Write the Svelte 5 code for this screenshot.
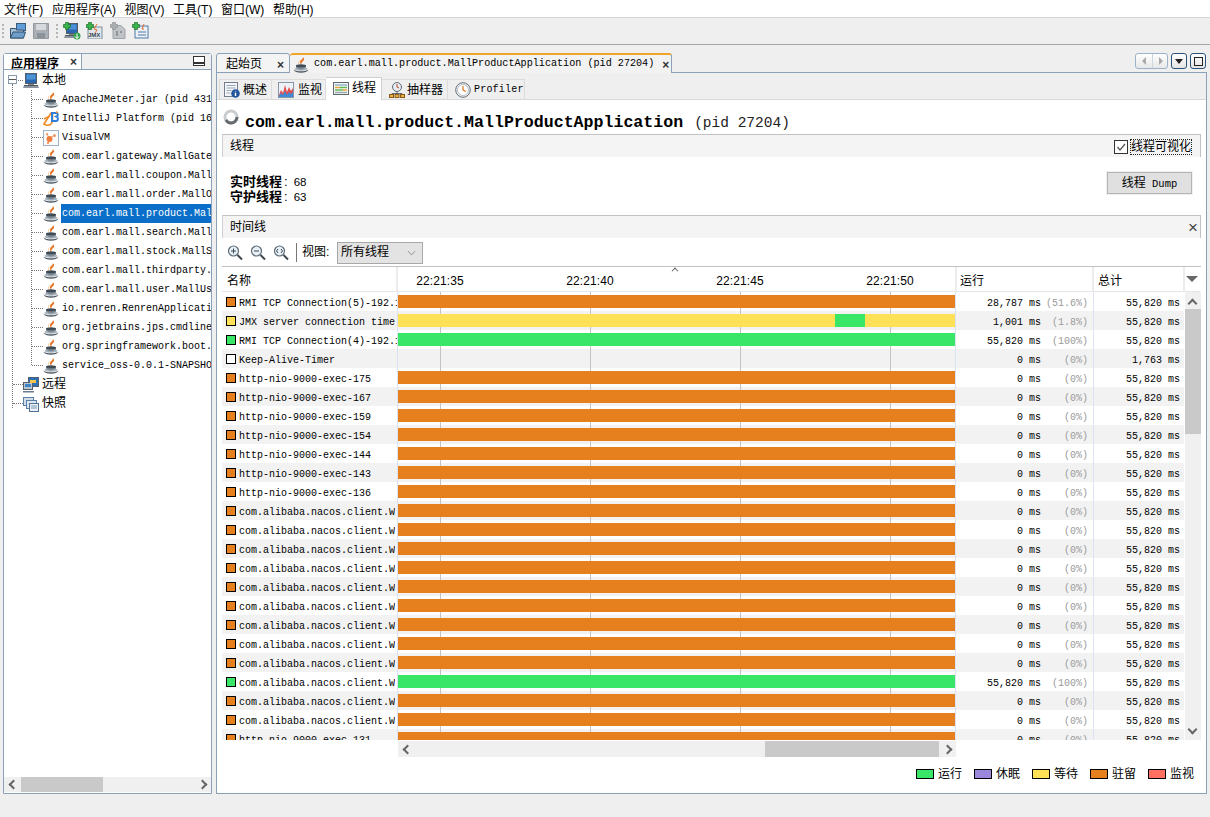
<script>
  const menus = ['文件(F)', '应用程序(A)', '视图(V)', '工具(T)', '窗口(W)', '帮助(H)'];
  const apps = [
    ['java', 'ApacheJMeter.jar (pid 431'],
    ['idea', 'IntelliJ Platform (pid 16'],
    ['vvm', 'VisualVM'],
    ['java', 'com.earl.gateway.MallGate'],
    ['java', 'com.earl.mall.coupon.Mall'],
    ['java', 'com.earl.mall.order.MallO'],
    ['java', 'com.earl.mall.product.Mal'],
    ['java', 'com.earl.mall.search.Mall'],
    ['java', 'com.earl.mall.stock.MallS'],
    ['java', 'com.earl.mall.thirdparty.'],
    ['java', 'com.earl.mall.user.MallUs'],
    ['java', 'io.renren.RenrenApplicati'],
    ['java', 'org.jetbrains.jps.cmdline'],
    ['java', 'org.springframework.boot.'],
    ['java', 'service_oss-0.0.1-SNAPSHO']
  ];
  const worker = 'com.alibaba.nacos.client.W';
  const park = (name) => ({ name, kind: 'park', run: '0 ms', pct: '(0%)', total: '55,820 ms' });
  const rows = [
    { name: 'RMI TCP Connection(5)-192.1', kind: 'park', run: '28,787 ms', pct: '(51.6%)', total: '55,820 ms' },
    { name: 'JMX server connection time', kind: 'wait', run: '1,001 ms', pct: '(1.8%)', total: '55,820 ms' },
    { name: 'RMI TCP Connection(4)-192.1', kind: 'run', run: '55,820 ms', pct: '(100%)', total: '55,820 ms' },
    { name: 'Keep-Alive-Timer', kind: 'none', run: '0 ms', pct: '(0%)', total: '1,763 ms' },
    ...[175, 167, 159, 154, 144, 143, 136].map((n) => park('http-nio-9000-exec-' + n)),
    ...Array.from({ length: 9 }, () => park(worker)),
    { name: worker, kind: 'run', run: '55,820 ms', pct: '(100%)', total: '55,820 ms' },
    park(worker),
    park(worker),
    park('http-nio-9000-exec-131')
  ];
  const times = ['22:21:35', '22:21:40', '22:21:45', '22:21:50'];
  const legend = [['run', '运行'], ['sleep', '休眠'], ['wait', '等待'], ['park', '驻留'], ['mon', '监视']];
  const subtabs = [
    ['i-info', '概述', false, false],
    ['i-chart', '监视', false, false],
    ['i-threads', '线程', true, false],
    ['i-sampler', '抽样器', false, false],
    ['i-clock', 'Profiler', false, true]
  ];
</script>

<svg class="defs" width="0" height="0" aria-hidden="true">
  <defs>
    <symbol id="java" viewBox="0 0 16 16">
      <path d="M9.800 0c.9 2-3.200 3.200-2.800 5.800.2 1 .9 1.800 1.200 2.400 0-1.200-.1-2 .8-3 1-1.100 2.500-2 2-3.600C10.700 1 10.300.4 9.800 0z" fill="#e8701e"/>
      <path d="M7.500 3C5.300 4.500 4.800 6.200 6.400 8.200 5 7.500 3.800 4.800 7.500 3z" fill="#f2a33c"/>
      <path d="M3 8.500h10v2.500c0 1.500-2.200 2.300-5 2.300S3 12.500 3 11z" fill="#7c8a96"/>
      <ellipse cx="8" cy="8.700" rx="5" ry="1.500" fill="#3f4a54"/>
      <path d="M.4 12.400c.8 2.200 3.900 3.300 7.600 3.300s6.800-1.100 7.600-3.300c-1 1.100-4 1.800-7.600 1.800S1.400 13.500.4 12.400z" fill="#4e5a65"/>
      <path d="M1.200 12c1.500 1.100 4 1.600 6.800 1.600s5.300-.5 6.800-1.600c-1-.9-2-1.200-2.800-1.300-.7 1.300-2.200 1.700-4 1.700s-3.300-.4-4-1.700c-.8.100-1.800.4-2.800 1.300z" fill="#a7b2bb"/>
    </symbol>
    <symbol id="idea" viewBox="0 0 16 16">
      <path d="M1 13 8 2 9.500 2 9.500 9C9.500 13 6.500 15 3 14z" fill="none" stroke="#f08a24" stroke-width="1.600"/>
      <path d="M9 2h4.500c1.500 0 2 2.800 0 3.500 2 .7 2 4.500-.5 4.500H9z" fill="none" stroke="#2f7fd8" stroke-width="2"/>
      <path d="M1 8 7 5M13 1l2 .5" stroke="#f08a24" stroke-width="1.400"/>
    </symbol>
    <symbol id="vvm" viewBox="0 0 16 16">
      <rect x=".5" y=".5" width="15" height="15" fill="#fbfbfb" stroke="#9fb2c6"/>
      <circle cx="6.500" cy="9" r="3" fill="#ee7c3c"/>
      <circle cx="11.500" cy="5.500" r="1.500" fill="#f19a6a"/>
      <circle cx="4" cy="4" r="1.100" fill="#f19a6a"/>
      <circle cx="5" cy="13" r="1" fill="#ee7c3c"/>
      <path d="M7 8 11 5.500M4 4l2 4M6 9 5 13" stroke="#ee7c3c" stroke-width=".7"/>
    </symbol>
    <symbol id="monitor" viewBox="0 0 16 16">
      <rect x="2.500" y=".5" width="11" height="10" fill="#2968b0" stroke="#555d64"/>
      <rect x="3.500" y="1.500" width="9" height="5" fill="#4b93d6"/>
      <path d="M5 11h6v1.500H5z" fill="#7b848c"/>
      <path d="M1 12.500h14l1 2.500H0z" fill="#8b949c"/>
      <path d="M1 12.500h14" stroke="#50585f"/>
    </symbol>
    <symbol id="remote" viewBox="0 0 16 16">
      <rect x="5.500" y=".5" width="10" height="9" fill="#2e70b8" stroke="#50606f"/>
      <rect x=".5" y="5.500" width="9" height="7" fill="#b9c6d1" stroke="#50606f"/>
      <rect x="2" y="7" width="6" height="3" fill="#3d84c9"/>
      <path d="M0 14h11v1.500H0z" fill="#6e7a85"/>
      <path d="M7 3h6v3H7z" fill="#f6c54a"/>
    </symbol>
    <symbol id="snapshot" viewBox="0 0 16 16">
      <rect x=".5" y="1.500" width="10" height="8" fill="#d4dee8" stroke="#5880a8"/>
      <rect x="3.500" y="4.500" width="10" height="8" fill="#dfe7ee" stroke="#5880a8"/>
      <rect x="6.500" y="7.500" width="9" height="8" fill="#edf1f5" stroke="#4d7299"/>
      <path d="M8 10h6M8 12h6" stroke="#7d9ab6"/>
    </symbol>
    <symbol id="plus" viewBox="0 0 8 8">
      <path d="M2.500.5h3v2h2v3h-2v2h-3v-2h-2v-3h2z" fill="#38b54a" stroke="#1f6b2a" stroke-width=".7"/>
    </symbol>
    <symbol id="i-info" viewBox="0 0 16 16">
      <rect x=".5" y=".5" width="13" height="14" fill="#f3f5f8" stroke="#73818e"/>
      <path d="M2.500 3.500h9M2.500 6h9M2.500 8.500h5M2.500 11h4" stroke="#9aa8b5"/>
      <circle cx="11.500" cy="11.500" r="4.300" fill="#23559d"/>
      <path d="M11.500 9.500v.8M11.500 11v3" stroke="#fff" stroke-width="1.400"/>
    </symbol>
    <symbol id="i-chart" viewBox="0 0 16 16">
      <rect x=".5" y=".5" width="15" height="15" fill="#eef2f7" stroke="#8696a6"/>
      <path d="M1 13 3 8 5 11 7 3 9 10 11 5 13 9 15 6V15H1z" fill="#e04e52"/>
      <path d="M1 14 3 11 5 13 7 9 9 13 11 10 13 12 15 10V15H1z" fill="#3d8ad8"/>
    </symbol>
    <symbol id="i-threads" viewBox="0 0 16 16">
      <rect x=".5" y="1.500" width="15" height="12" fill="#f5f5ef" stroke="#5c6973"/>
      <path d="M2 4h12" stroke="#8eb0d0" stroke-width="1.400"/>
      <path d="M2 6.500h5" stroke="#e9a33a" stroke-width="1.400"/>
      <path d="M7 6.500h7" stroke="#59b856" stroke-width="1.400"/>
      <path d="M2 9h8" stroke="#59b856" stroke-width="1.400"/>
      <path d="M10 9h4" stroke="#e9a33a" stroke-width="1.400"/>
      <path d="M2 11.500h12" stroke="#9aa6b0" stroke-width="1.400"/>
    </symbol>
    <symbol id="i-sampler" viewBox="0 0 16 16">
      <circle cx="8" cy="5" r="4.500" fill="#e6ebf0" stroke="#5e6b76"/>
      <path d="M8 2v3l2 1" stroke="#c04b2f" fill="none"/>
      <path d="M8 9.500v2M3 11.500h10M3 11.500v1M13 11.500v1" stroke="#5e6b76"/>
      <rect x=".5" y="12.500" width="4" height="3" fill="#e9b04a" stroke="#8a5a16"/>
      <rect x="6" y="12.500" width="4" height="3" fill="#e9b04a" stroke="#8a5a16"/>
      <rect x="11.500" y="12.500" width="4" height="3" fill="#e9b04a" stroke="#8a5a16"/>
    </symbol>
    <symbol id="i-clock" viewBox="0 0 16 16">
      <circle cx="8" cy="8" r="7.300" fill="#eef0f2" stroke="#66727c"/>
      <circle cx="8" cy="8" r="5.500" fill="#fff" stroke="#b6bec5"/>
      <path d="M8 4v4l3 1.500" fill="none" stroke="#d9822b" stroke-width="1.300"/>
    </symbol>
    <symbol id="z-in" viewBox="0 0 16 16">
      <circle cx="6.500" cy="6" r="5" fill="#e8f1f8" stroke="#5f6b75" stroke-width="1.200"/>
      <path d="M4 6h5M6.500 3.500v5" stroke="#3d464d"/>
      <path d="m10.500 10 4.500 4.500" stroke="#3d464d" stroke-width="2"/>
    </symbol>
    <symbol id="z-out" viewBox="0 0 16 16">
      <circle cx="6.500" cy="6" r="5" fill="#e8f1f8" stroke="#5f6b75" stroke-width="1.200"/>
      <path d="M4 6h5" stroke="#3d464d"/>
      <path d="m10.500 10 4.500 4.500" stroke="#3d464d" stroke-width="2"/>
    </symbol>
    <symbol id="z-fit" viewBox="0 0 16 16">
      <circle cx="6.500" cy="6" r="5" fill="#e8f1f8" stroke="#5f6b75" stroke-width="1.200"/>
      <path d="M5 4 3.500 6 5 8M8 4l1.500 2L8 8" fill="none" stroke="#3d464d"/>
      <path d="m10.500 10 4.500 4.500" stroke="#3d464d" stroke-width="2"/>
    </symbol>
  </defs>
</svg>

<div class="app">
  <nav class="menubar">
    {#each menus as m}<span class="menu">{m}</span>{/each}
  </nav>

  <div class="toolbar">
    <span class="grip"></span>
    <svg class="tool" viewBox="0 0 16 16">
      <rect x="6.500" y=".5" width="9" height="7" fill="#5f9ed8" stroke="#3d5c7c"/>
      <path d="M.5 5.500h5l1 1.500h7v8H.5z" fill="#a8c2da" stroke="#34536f"/>
      <path d="M.5 15 3 9h12.500l-2 6z" fill="#6d9dc8" stroke="#34536f"/>
    </svg>
    <svg class="tool" viewBox="0 0 16 16">
      <path d="M.5.5h15v15H.5z" fill="#a9afb4" stroke="#949a9f"/>
      <path d="M3 1h10v6H3z" fill="#d6dadd"/>
      <path d="M4 10h8v5H4z" fill="#8c9398"/>
    </svg>
    <span class="grip g2"></span>
    <span class="tool stack t3">
      <svg viewBox="0 0 16 16"><use href="#monitor"/></svg>
      <svg class="plus" viewBox="0 0 8 8"><use href="#plus"/></svg>
      <svg class="plusr" viewBox="0 0 8 8"><circle cx="4" cy="4" r="3.500" fill="#2ea14a"/><path d="M4 1.500v5M2 4.500l2 2 2-2" stroke="#fff" fill="none"/></svg>
    </span>
    <span class="tool stack t4">
      <svg viewBox="0 0 16 16"><rect x="1" y="4" width="14" height="12" fill="#dfe6ec" stroke="#7f8d9a"/><path d="M10 1 7 6l3 1-2 3" stroke="#e06a2e" fill="none"/></svg>
      <span class="jmx">JMX</span>
      <svg class="plus" viewBox="0 0 8 8"><use href="#plus"/></svg>
    </span>
    <span class="tool stack t5">
      <svg viewBox="0 0 16 16"><path d="M2 2.500h8l4 4v9H2z" fill="#c0c4c7" stroke="#9ea3a7"/><path d="M5 8h2v5H5zM9 8h2v2H9z" fill="#8f9599"/></svg>
      <svg class="plus dim" viewBox="0 0 8 8"><path d="M2.500.5h3v2h2v3h-2v2h-3v-2h-2v-3h2z" fill="#a8aeb2" stroke="#8f9599" stroke-width=".7"/></svg>
    </span>
    <span class="tool stack t6">
      <svg viewBox="0 0 16 16"><rect x="2" y="3" width="13" height="12" fill="#eaf0f5" stroke="#4f7ba5"/><path d="M5 9h8M5 12h8" stroke="#4f7ba5"/><path d="M11 1 9 6h2" stroke="#e06a2e" fill="none"/></svg>
      <svg class="plus" viewBox="0 0 8 8"><use href="#plus"/></svg>
    </span>
  </div>

  <main class="main">
    <aside class="left">
      <div class="lhead">
        <div class="ltab"><b>应用程序</b><span class="x">×</span></div>
        <span class="minbtn"></span>
      </div>
      <div class="tree">
        <div class="tnode root">
          <span class="expander"></span>
          <svg class="ico"><use href="#monitor"/></svg>
          <span class="cjk">本地</span>
        </div>
        {#each apps as [icon, label], i}
          <div class="tnode child" class:last={i === apps.length - 1}>
            <svg class="ico"><use href={'#' + icon}/></svg>
            <span class="mono" class:sel={i === 6}>{label}</span>
          </div>
        {/each}
        <div class="tnode root leaf">
          <svg class="ico"><use href="#remote"/></svg>
          <span class="cjk">远程</span>
        </div>
        <div class="tnode root leaf end">
          <svg class="ico"><use href="#snapshot"/></svg>
          <span class="cjk">快照</span>
        </div>
      </div>
      <div class="hbar lhbar">
        <span class="arr lft"></span>
        <span class="thumb lthumb"></span>
        <span class="arr rgt"></span>
      </div>
    </aside>

    <section class="right">
      <div class="rtabs">
        <div class="rtab first"><span>起始页</span><span class="x">×</span></div>
        <div class="rtab active">
          <svg class="ico"><use href="#java"/></svg>
          <span class="mono tabtitle">com.earl.mall.product.MallProductApplication (pid 27204)</span>
          <span class="x">×</span>
        </div>
        <div class="tabctl">
          <span class="navpair"><span class="tri l"></span><span class="tri r"></span></span>
          <span class="winbtn"><span class="tri d"></span></span>
          <span class="winbtn"><span class="sq"></span></span>
        </div>
      </div>

      <div class="rbody">
        <div class="subtabs">
          {#each subtabs as [icon, label, on, mono]}
            <div class="stab" class:on>
              <svg class="ico"><use href={'#' + icon}/></svg>
              <span class:mono>{label}</span>
            </div>
          {/each}
        </div>

        <h1 class="title">
          <svg class="spin" viewBox="0 0 16 16">
            <circle cx="8" cy="8" r="6" fill="none" stroke="#c9ccce" stroke-width="3"/>
            <path d="M14 8a6 6 0 0 1-6 6 6 6 0 0 1-5-3" fill="none" stroke="#666b70" stroke-width="3"/>
          </svg>
          <span class="tmain">com.earl.mall.product.MallProductApplication</span>
          <span class="tpid">(pid 27204)</span>
        </h1>

        <div class="sechead">
          <span class="shlabel">线程</span>
          <label class="check">
            <span class="box"><svg viewBox="0 0 12 12"><path d="M2.500 6 5 9l5-6" fill="none" stroke="#555" stroke-width="1.300"/></svg></span>
            <span class="focus">线程可视化</span>
          </label>
        </div>

        <div class="stats">
          <div class="statlines">
            <div><b>实时线程</b><i>:</i><span>68</span></div>
            <div><b>守护线程</b><i>:</i><span>63</span></div>
          </div>
          <button class="dump">线程 <span class="mono">Dump</span></button>
        </div>

        <div class="sechead tl">
          <span class="shlabel">时间线</span>
          <span class="x big">×</span>
        </div>

        <div class="tltools">
          <svg class="zoomi"><use href="#z-in"/></svg>
          <svg class="zoomi"><use href="#z-out"/></svg>
          <svg class="zoomi"><use href="#z-fit"/></svg>
          <span class="vsep"></span>
          <span class="viewlbl">视图:</span>
          <span class="combo">所有线程<svg viewBox="0 0 10 6"><path d="M1 1l4 4 4-4" fill="none" stroke="#a8a8a8" stroke-width="1.200"/></svg></span>
        </div>

        <div class="table">
          <div class="thead">
            <div class="hname"><span>名称</span></div>
            <div class="htime">
              <span class="caret"></span>
              <div class="times">{#each times as t}<span>{t}</span>{/each}</div>
            </div>
            <div class="hrun"><span>运行</span></div>
            <div class="htotal"><span>总计</span></div>
            <div class="hcorner"><span class="tri d gray"></span></div>
          </div>
          <div class="tbody">
            <div class="rows">
              {#each rows as r, i}
                <div class="row" class:alt={i % 2 === 1}>
                  <div class="cname">
                    <span class="swatch {r.kind}"></span>
                    <span class="mono nm">{r.name}</span>
                  </div>
                  <div class="ctime">
                    {#if r.kind !== 'none'}
                      <div class="bar {r.kind}">
                        {#if i === 1}<span class="seg"></span>{/if}
                      </div>
                    {/if}
                  </div>
                  <div class="crun mono"><span class="ms">{r.run}</span><span class="pct">{r.pct}</span></div>
                  <div class="ctotal mono">{r.total}</div>
                </div>
              {/each}
            </div>
            <div class="vbar">
              <span class="chev up"></span>
              <span class="vthumb"></span>
              <span class="chev down"></span>
            </div>
          </div>
          <div class="hfoot">
            <div class="hbar thbar">
              <span class="arr lft"></span>
              <span class="thumb tthumb"></span>
              <span class="arr rgt"></span>
            </div>
          </div>
        </div>

        <div class="legend">
          {#each legend as [k, label]}
            <span class="lg"><span class="lsw {k}"></span>{label}</span>
          {/each}
        </div>
      </div>
    </section>
  </main>
</div>

<style>
  :global(body) { margin: 0; background: #efefef; }
  .defs { position: absolute; }
  .app {
    width: 1210px; height: 817px; overflow: hidden; display: flex; flex-direction: column;
    background: #efefef; color: #000;
    font: 12px/1.2 "Liberation Sans", "Noto Sans CJK SC", sans-serif;
  }
  .mono { font-family: "Liberation Mono", "Noto Sans CJK SC", monospace; font-size: 10px; white-space: nowrap; }
  .cjk { font-size: 12px; }
  .x { font-size: 14px; font-weight: 700; color: #333; line-height: 1; }

  .menubar { height: 17px; box-sizing: border-box; padding: 3px 0 0 4px; background: #fff; display: flex; align-items: center; gap: 8.600px; }
  .menu { white-space: nowrap; }

  .toolbar {
    height: 26px; border-top: 1px solid #d6d6d6; border-bottom: 1px solid #a6a6a6;
    display: flex; align-items: center; padding-left: 2px; position: relative;
  }
  .grip { width: 2px; height: 14px; border-left: 2px dotted #b5b5b5; margin-right: 4px; }
  .g2 { margin: 0 4px 0 0; }
  .tool { width: 16px; height: 16px; margin-right: 7px; display: block; flex: none; }
  .stack { position: relative; }
  .stack > svg:first-child { width: 16px; height: 16px; display: block; }
  .t4 { margin-right: 8px; }
  .t5 { margin-right: 6px; }
  .plus { position: absolute; left: -1px; top: -1px; width: 8px; height: 8px; }
  .plusr { position: absolute; right: -1px; bottom: -1px; width: 8px; height: 8px; }
  .jmx { position: absolute; left: 1px; bottom: 1px; font: 700 6px/6px "Liberation Sans", sans-serif; color: #3a4650; }

  .main { flex: 1; display: flex; padding: 8px 3px 23px 3px; gap: 4px; min-height: 0; }

  .left { width: 209px; flex: none; display: flex; flex-direction: column; border: 1px solid #8aa1b9; border-radius: 3px 3px 0 0; background: #fff; box-sizing: border-box; }
  .lhead { height: 15px; display: flex; background: #efefef; border-bottom: 1px solid #8aa1b9; position: relative; flex: none; }
  .ltab { width: 78px; box-sizing: border-box; background: #fff; border-right: 1px solid #8aa1b9; display: flex; padding: 3px 0 0 7px; gap: 11px; overflow: hidden; }
  .ltab b { font-weight: 700; font-size: 12px; line-height: 14px; white-space: nowrap; }
  .ltab .x { font-size: 12px; margin-top: -1px; }
  .minbtn { position: absolute; right: 6px; top: 2px; width: 10px; height: 8px; border: 1px solid #333; background: linear-gradient(#fff 5px, #333 5px, #333 7px, #fff 7px); }

  .tree { flex: 1; padding-top: 1px; overflow: hidden; position: relative; }
  .tree::before { content: ""; position: absolute; left: 8px; top: 14px; height: 324px; border-left: 1px dotted #777; }
  .tree::after { content: ""; position: absolute; left: 27px; top: 20px; height: 275px; border-left: 1px dotted #777; }
  .tnode { height: 19px; display: flex; align-items: center; position: relative; white-space: nowrap; }
  .root { padding-left: 19px; gap: 3px; }
  .child { padding-left: 39px; gap: 2px; }
  .child::before { content: ""; position: absolute; left: 28px; top: 9px; width: 11px; border-top: 1px dotted #777; }
  .leaf::before { content: ""; position: absolute; left: 9px; top: 9px; width: 10px; border-top: 1px dotted #777; }
  .root:not(.leaf)::before { content: ""; position: absolute; left: 14px; top: 9px; width: 5px; border-top: 1px dotted #777; }
  .expander { position: absolute; left: 4px; top: 4px; width: 7px; height: 7px; border: 1px solid #8a9aaa; background: linear-gradient(#fff 3px, #555 3px, #555 4px, #fff 4px); z-index: 1; }
  .ico { width: 16px; height: 16px; flex: none; }
  .child .mono { display: inline-block; line-height: 19px; padding-left: 1px; height: 19px; flex: 1; overflow: hidden; }
  .sel { background: #0b6fc9; color: #fff; }

  .hbar { background: #f0f0f0; display: flex; align-items: center; position: relative; height: 15px; }
  .lhbar { margin-bottom: 1px; flex: none; }
  .arr { width: 16px; height: 100%; flex: none; display: flex; align-items: center; justify-content: center; }
  .arr::before { content: ""; width: 5px; height: 5px; border: solid #666; border-width: 2px 0 0 2px; }
  .lft::before { transform: translateX(1px) rotate(-45deg); }
  .rgt::before { transform: translateX(-1px) rotate(135deg); }
  .rgt { margin-left: auto; }
  .thumb { height: 100%; background: #c9c9c9; flex: none; }
  .lthumb { width: 82px; margin-left: 1px; }
  .tthumb { width: 174px; margin-left: 351px; }

  .right { flex: 1; min-width: 0; display: flex; flex-direction: column; }
  .rtabs { height: 20px; display: flex; flex: none; position: relative; z-index: 1; margin-bottom: -1px; }
  .rtab { display: flex; align-items: center; box-sizing: border-box; height: 20px; padding-top: 3px; }
  .rtab.first { width: 74px; padding-left: 9px; gap: 15px; background: #f4f4f4; border: 1px solid #8aa1b9; border-radius: 3px 3px 0 0; }
  .rtab.first .x { font-size: 12px; }
  .rtab.active { width: 382px; padding-left: 3px; gap: 4px; background: #f2f2f2; border-top: 2px solid #f0a428; border-right: 1px solid #8aa1b9; border-radius: 3px 3px 0 0; padding-top: 1px; }
  .tabtitle { font-size: 10.150px; margin-left: 1px; }
  .rtab.active .x { font-size: 12px; margin-left: 4px; }
  .tabctl { margin-left: auto; display: flex; gap: 3px; padding-right: 1px; height: 16px; align-items: flex-start; }
  .navpair { width: 31px; height: 14px; border: 1px solid #9db2c9; border-radius: 3px; background: linear-gradient(#fff, #e8e8e8); display: flex; position: relative; }
  .navpair::after { content: ""; position: absolute; left: 16px; top: 0; bottom: 0; border-left: 1px solid #cdd6df; }
  .winbtn { width: 14px; height: 14px; border: 1px solid #2b5378; border-radius: 3px; background: linear-gradient(#fff, #e4e4e4); display: flex; align-items: center; justify-content: center; }
  .tri { width: 0; height: 0; display: block; }
  .tri.l { border: 4px solid transparent; border-right: 4px solid #aaa; border-left: 0; margin: 3px 0 0 6px; }
  .tri.r { border: 4px solid transparent; border-left: 4px solid #aaa; border-right: 0; margin: 3px 0 0 13px; }
  .tri.d { border: 4px solid transparent; border-top: 5px solid #222; border-bottom: 0; }
  .tri.gray { border-width: 6px 6px 0; border-top-color: #666; }
  .sq { width: 7px; height: 7px; border: 1px solid #222; }

  .rbody { flex: 1; min-height: 0; box-sizing: border-box; border: 1px solid #8aa1b9; background: #fff; display: flex; flex-direction: column; }
  .subtabs { height: 27px; flex: none; box-sizing: border-box; background: #efefef; border-bottom: 1px solid #d8d8d8; display: flex; align-items: flex-end; padding-left: 2px; }
  .stab { height: 20px; box-sizing: border-box; display: flex; align-items: center; padding-top: 1px; border: 1px solid #dcdcdc; border-bottom: 0; border-left: 0; white-space: nowrap; flex: none; }
  .stab:nth-child(1) { width: 53px; padding-left: 4px; gap: 3px; border-left: 1px solid #dcdcdc; }
  .stab:nth-child(2) { width: 54px; padding-left: 6px; gap: 4px; }
  .stab.on { width: 56px; height: 23px; background: #fff; margin-bottom: -1px; padding: 0 0 1px 7px; gap: 3px; border-color: #d0d0d0; }
  .stab:nth-child(4) { width: 66px; padding-left: 7px; gap: 2px; }
  .stab:nth-child(5) { width: 77px; padding-left: 7px; gap: 3px; }
  .stab .mono { letter-spacing: 0.2px; }

  .title { margin: 0; height: 34px; box-sizing: border-box; display: flex; align-items: center; padding: 12px 0 0 6px; flex: none; font: inherit; }
  .spin { width: 16px; height: 16px; margin: -13px 6px 0 0; flex: none; }
  .tmain { font: 700 16.600px/1 "Liberation Mono", monospace; white-space: nowrap; }
  .tpid { font: 400 14.500px/1 "Liberation Mono", monospace; margin-left: 11px; color: #222; white-space: nowrap; }

  .sechead { height: 23px; flex: none; box-sizing: border-box; margin: 0 5px; background: #f4f4f4; border-top: 1px solid #c2c2c2; border-left: 1px solid #d0d0d0; border-right: 1px solid #c2c2c2; display: flex; align-items: center; justify-content: space-between; padding-left: 7px; }
  .shlabel { padding-top: 1px; }
  .check { display: flex; align-items: center; gap: 3px; padding: 1px 9px 0 0; }
  .box { width: 12px; height: 12px; border: 1px solid #333; background: #fff; display: block; }
  .box svg { display: block; width: 12px; height: 12px; }
  .focus { outline: 1px dotted #222; white-space: nowrap; line-height: 14px; }
  .big { font-weight: 400; font-size: 17px; margin-right: 2px; color: #444; }

  .stats { height: 58px; flex: none; display: flex; justify-content: space-between; padding: 15px 14px 0 13px; box-sizing: border-box; }
  .statlines { font-size: 13px; line-height: 15px; padding-top: 2px; }
  .statlines > div { height: 15px; white-space: nowrap; }
  .statlines b { font-weight: 700; line-height: 15px; }
  .statlines i { font-style: normal; margin-left: 2px; }
  .statlines span { font: 11.500px/15px "Liberation Sans", sans-serif; margin-left: 6px; }
  .dump { width: 85px; height: 22px; box-sizing: border-box; background: #e0e0e0; border: 1px solid #b4b4b4; box-shadow: 0 0 0 1px #f0f0f0; padding: 0; font: inherit; color: #000; }
  .dump .mono { margin-left: 3px; font-size: 10.500px; }

  .tltools { height: 28px; flex: none; display: flex; align-items: center; padding: 1px 0 0 10px; box-sizing: border-box; }
  .zoomi { width: 16px; height: 16px; margin-right: 7px; }
  .vsep { width: 1px; height: 19px; background: #777; margin: 0 5px 0 0; }
  .viewlbl { margin-right: 3px; white-space: nowrap; width: 32px; }
  .combo { width: 86px; height: 22px; box-sizing: border-box; background: #e3e3e3; border: 1px solid #a8a8a8; display: flex; align-items: center; justify-content: space-between; padding: 0 6px 0 3px; font-size: 12px; }
  .combo svg { width: 9px; height: 6px; }

  .table { flex: none; margin-left: 5px; width: 979px; }
  .thead { height: 26px; display: flex; border-top: 1px solid #c2c2c2; box-sizing: border-box; background: #fff; }
  .thead > div { box-sizing: border-box; border-right: 2px solid #ececec; display: flex; align-items: center; border-bottom: 1px solid #e6e6e6; }
  .hname, .hrun, .htotal { padding-top: 5px; }
  .hname { width: 176px; padding-left: 5px; }
  .htime { width: 559px; position: relative; overflow: hidden; }
  .hrun { width: 137px; padding-left: 3px; }
  .htotal { width: 91px; padding-left: 4px; }
  .hcorner { width: 15px; padding-left: 1px; }
  .thead > .hcorner { border-right: 0; }
  .times { display: flex; margin-left: -33px; font: 12px "Liberation Sans", sans-serif; padding-top: 3px; letter-spacing: .1px; }
  .times span { width: 150px; flex: none; text-align: center; }
  .caret { position: absolute; left: 274px; top: 1px; width: 5px; height: 5px; border-left: 1px solid #555; border-top: 1px solid #555; transform: rotate(45deg) scale(.8); }

  .tbody { height: 448px; display: flex; overflow: hidden; }
  .rows { width: 962px; flex: none; }
  .row { height: 19px; display: flex; background: #fff; }
  .row.alt { background: #f2f2f2; }
  .cname { width: 176px; flex: none; box-sizing: border-box; overflow: hidden; display: flex; align-items: center; padding-left: 4px; gap: 3px; border-right: 1px solid #dbe2f3; }
  .nm { padding-top: 4px; overflow: hidden; }
  .swatch { width: 8px; height: 8px; border: 1px solid #000; flex: none; }
  .ctime { width: 558px; flex: none; box-sizing: border-box; border-right: 1px solid #dbe2f3; padding: 3px 0; background-image: linear-gradient(to right, #c4c4c4 1px, transparent 1px); background-size: 150px 100%; background-position: 42px 0; }
  .bar { height: 13px; position: relative; display: flex; }
  .seg { display: block; width: 30px; height: 100%; background: #39e667; margin-left: 437px; }
  .crun { width: 138px; flex: none; box-sizing: border-box; display: flex; border-right: 1px solid #dbe2f3; align-items: center; padding-top: 4px; }
  .ms { width: 85px; text-align: right; }
  .pct { width: 47px; text-align: right; color: #9a9a9a; }
  .ctotal { width: 90px; flex: none; box-sizing: border-box; display: flex; align-items: center; justify-content: flex-end; padding: 4px 4px 0 0; }

  .park { background: #e67f1e; }
  .wait { background: #ffe158; }
  .run { background: #39e667; }
  .none { background: #fff; }
  .sleep { background: #9b87dc; }
  .mon { background: #ff7063; }

  .vbar { width: 16px; flex: none; background: #f0f0f0; position: relative; margin-left: 1px; }
  .chev { width: 5px; height: 5px; border: solid #666; border-width: 2px 0 0 2px; position: absolute; left: 4px; }
  .chev.up { top: 8px; transform: rotate(45deg); }
  .chev.down { bottom: 7px; transform: rotate(225deg); }
  .vthumb { position: absolute; left: 0; right: 0; top: 17px; height: 125px; background: #c9c9c9; }

  .hfoot { padding: 1px 0 0 176px; }
  .thbar { width: 558px; height: 16px; }

  .legend { display: flex; justify-content: flex-end; padding: 10px 15px 0 0; }
  .lg { width: 58px; box-sizing: border-box; display: flex; align-items: center; gap: 4px; white-space: nowrap; }
  .lg:last-child { width: 43px; }
  .lsw { width: 16px; height: 8px; border: 1px solid #000; flex: none; }
</style>
